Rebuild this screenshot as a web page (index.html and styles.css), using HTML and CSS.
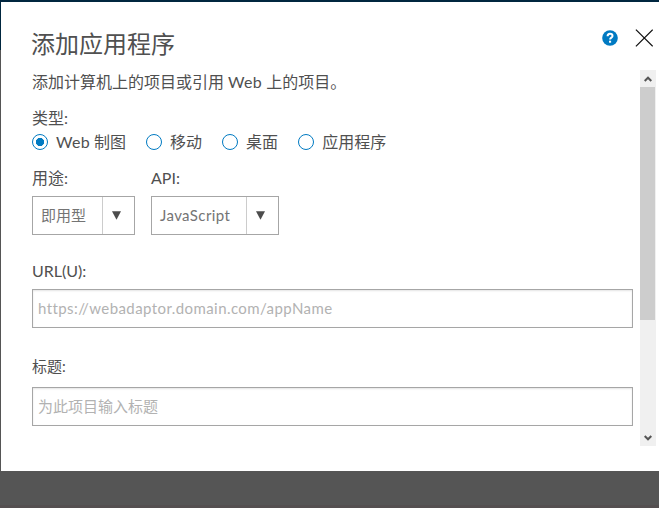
FILE: index.html
```html
<!DOCTYPE html>
<html lang="zh-CN">
<head>
<meta charset="utf-8">
<title>添加应用程序</title>
<link rel="stylesheet" href="styles.css">
</head>
<body>
<div class="dialog">
  <header class="head">
    <h1>添加应用程序</h1>
    <div class="actions">
      <svg class="help" width="16" height="16" viewBox="0 0 16 16"><circle cx="8" cy="8" r="7.8" fill="#007ac2"/><path d="M5.6 6.2C5.6 4.5 6.6 3.7 8 3.7s2.5.8 2.5 2.2c0 1.7-2.4 1.7-2.4 3.6" fill="none" stroke="#fff" stroke-width="2"/><rect x="7" y="10.7" width="2.1" height="2" fill="#fff"/></svg>
      <svg class="close" width="18" height="18" viewBox="0 0 18 18"><path d="M.9.6l16.8 16.8M17.7.6L.9 17.4" stroke="#111" stroke-width="1.25"/></svg>
    </div>
  </header>
  <div class="scroll">
    <form class="form">
      <p class="intro">添加计算机上的项目或引用 <span class="web">Web</span> 上的项目。</p>
      <div class="label">类型:</div>
      <div class="radios">
        <label class="radio"><i class="dot on"></i><span><span class="web">Web</span> 制图</span></label>
        <label class="radio"><i class="dot"></i><span>移动</span></label>
        <label class="radio"><i class="dot"></i><span>桌面</span></label>
        <label class="radio"><i class="dot"></i><span>应用程序</span></label>
      </div>
      <div class="selects">
        <div>
          <div class="label">用途:</div>
          <div class="select purpose"><span class="value">即用型</span><span class="arrow"><svg width="9" height="9" viewBox="0 0 9 9"><path d="M0 .3h9L4.5 8.7z" fill="#4c4c4c"/></svg></span></div>
        </div>
        <div>
          <div class="label api">API:</div>
          <div class="select lang"><span class="value js">JavaScript</span><span class="arrow"><svg width="9" height="9" viewBox="0 0 9 9"><path d="M0 .3h9L4.5 8.7z" fill="#4c4c4c"/></svg></span></div>
        </div>
      </div>
      <label class="field"><span class="label url">URL(U):</span><input class="address" type="text" placeholder="https://webadaptor.domain.com/appName"></label>
      <label class="field title"><span class="label">标题:</span><input type="text" placeholder="为此项目输入标题"></label>
    </form>
    <div class="bar">
      <svg class="up" width="8" height="6" viewBox="0 0 8 6"><path d="M.7 5L4 1.7 7.3 5" fill="none" stroke="#555" stroke-width="2"/></svg>
      <div class="thumb"></div>
      <svg class="down" width="8" height="6" viewBox="0 0 8 6"><path d="M.7 1L4 4.3 7.3 1" fill="none" stroke="#555" stroke-width="2"/></svg>
    </div>
  </div>
</div>
</body>
</html>
```
FILE: styles.css
```css
* { box-sizing: border-box; }
body {
  margin: 0;
  height: 508px;
  padding: 2px 0 0 1px;
  overflow: hidden;
  background:
    linear-gradient(#00263f, #00263f) 0 0 / 100% 2px no-repeat,
    linear-gradient(#00263f, #00263f) 0 0 / 1px 50px no-repeat,
    linear-gradient(#544f50, #544f50) 0 505px / 100% 3px no-repeat,
    #555;
  color: #505050;
  font: 400 16px/24px Lato, "Noto Sans CJK SC", sans-serif;
}
.dialog { height: 469px; background: #fff; }
.head { display: flex; justify-content: space-between; height: 68px; padding: 25px 6px 0 30px; }
h1 { margin: 0; font-size: 24px; line-height: 34px; font-weight: 400; }
.actions { display: flex; align-items: flex-start; gap: 18px; }
.help { margin: 3px -1px 0 0; }
.close { margin-top: 2px; }
.scroll { display: flex; height: 376px; }
.form { width: 601px; margin-left: 31px; }
.intro { margin: 0; height: 36px; }
.web { letter-spacing: .3px; }
.label { display: block; height: 24px; }
.radios { display: flex; gap: 20px; height: 36px; }
.radio { display: flex; align-items: flex-start; gap: 8px; }
.dot { width: 16px; height: 16px; margin-top: 4px; border: 1.4px solid #007ac2; border-radius: 50%; }
.on { background: radial-gradient(circle, #007ac2 3.8px, transparent 4.4px); }
.selects { display: flex; gap: 16px; }
.select { display: flex; height: 39px; margin-top: 6px; border: 1px solid #a6a6a6; color: #747474; font-size: 15px; line-height: 37px; }
.purpose { width: 103px; }
.lang { width: 128px; }
.value { flex: 1; padding-left: 8px; }
.js { letter-spacing: .4px; }
.arrow { display: flex; align-items: center; width: 32px; padding-left: 9px; border-left: 1px solid #ccc; }
.field { display: block; margin-top: 24px; }
.title { margin-top: 26px; }
.title .label { font-size: 15px; }
.title input { margin-top: 9px; padding-bottom: 2px; }
input {
  display: block;
  width: 601px;
  height: 39px;
  margin-top: 6px;
  padding: 0 5px;
  border: 1px solid #a6a6a6;
  box-shadow: inset 0 1px 2px #e4e4e4;
  font: 400 15px Lato, "Noto Sans CJK SC", sans-serif;
}
input::placeholder { color: #b2b2b2; }
.address { padding-bottom: 1px; letter-spacing: .42px; font-variant-ligatures: none; }
.bar { display: flex; flex-direction: column; align-items: center; width: 16px; margin-left: 7px; background: #f0f0f0; }
.thumb { width: 15px; height: 233px; margin-top: 5px; align-self: flex-start; background: #cdcdcd; }
.up { margin-top: 6px; }
.down { margin-top: auto; margin-bottom: 5px; }
```
